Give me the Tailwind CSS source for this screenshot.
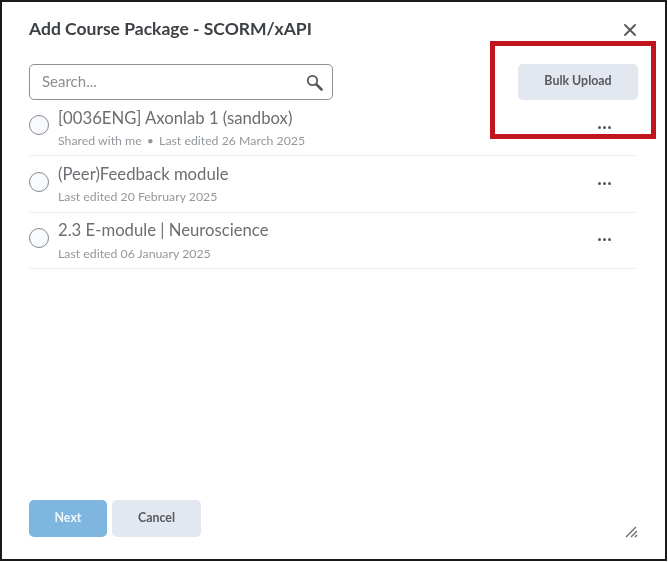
<!DOCTYPE html>
<html lang="en">
<head>
  <meta charset="UTF-8">
  <meta name="viewport" content="width=device-width, initial-scale=1.0">
  <title>Add Course Package</title>
  <script src="https://cdn.jsdelivr.net/npm/@tailwindcss/browser@4"></script>
</head>
<body class="bg-white font-['Lato',sans-serif]">
  <div class="relative w-[667px] h-[561px] overflow-hidden border-2 border-[#1a1a1a] bg-white flex flex-col pl-[27px] pr-[27px] blur-[0.4px]">
    <!-- Header -->
    <div class="flex items-center justify-between h-[52px] pt-[2px] shrink-0">
      <h1 class="text-[17.5px] font-bold text-[#3d4044]">Add Course Package - SCORM/xAPI</h1>
      <svg class="w-[12px] h-[12px] mr-[2px] mt-[2px]" viewBox="0 0 12 12" fill="none" stroke="#54585c" stroke-width="1.8" stroke-linecap="round"><path d="M1 1l10 10M11 1L1 11"/></svg>
    </div>

    <!-- Toolbar -->
    <div class="flex items-center justify-between mt-[10px] h-[36px] shrink-0">
      <div class="w-[304px] h-[36px] flex items-center justify-between border border-[#8b8f94] rounded-[5px] pl-[12px] pr-[9px]">
        <span class="text-[15px] leading-[20px] mb-[3px] text-[#8a8d91]">Search...</span>
        <svg class="w-[17px] h-[17px]" viewBox="0 0 17 17" fill="none" stroke="#54585c"><circle cx="6.5" cy="6.5" r="4.7" stroke-width="1.8"/><path d="M10.5 10.5l5 5" stroke-width="2.6" stroke-linecap="round"/></svg>
      </div>
      <button class="w-[120px] h-[36px] pb-[2px] bg-[#e3e7ef] rounded-[5px] text-[12.4px] font-bold text-[#56595e]">Bulk Upload</button>
    </div>

    <!-- Packages -->
    <ul class="w-[607px]">
      <li class="flex h-[56px] border-b border-[#e9edf3]">
        <div class="w-[20px] h-[20px] mt-[15px] rounded-full border-[1.5px] border-[#85898e] bg-[#f9fafe] shrink-0"></div>
        <div class="ml-[9px] flex-1">
          <p class="text-[16.7px] leading-[20px] mt-[8px] text-[#6b6e72]">[0036ENG] Axonlab 1 (sandbox)</p>
          <p class="text-[12.3px] leading-[16px] mt-[5px] text-[#94979b]">Shared with me <span class="mx-[2px]">•</span> Last edited 26 March 2025</p>
        </div>
        <div class="flex gap-[2px] mt-[26px] mr-[25px] h-[3px]">
          <span class="w-[3px] h-[3px] rounded-full bg-[#54585c]"></span><span class="w-[3px] h-[3px] rounded-full bg-[#54585c]"></span><span class="w-[3px] h-[3px] rounded-full bg-[#54585c]"></span>
        </div>
      </li>
      <li class="flex h-[57px] border-b border-[#e9edf3]">
        <div class="w-[20px] h-[20px] mt-[16px] rounded-full border-[1.5px] border-[#85898e] bg-[#f9fafe] shrink-0"></div>
        <div class="ml-[9px] flex-1">
          <p class="text-[16.7px] leading-[20px] mt-[8px] text-[#6b6e72]">(Peer)Feedback module</p>
          <p class="text-[12.3px] leading-[16px] mt-[5px] text-[#94979b]">Last edited 20 February 2025</p>
        </div>
        <div class="flex gap-[2px] mt-[26px] mr-[25px] h-[3px]">
          <span class="w-[3px] h-[3px] rounded-full bg-[#54585c]"></span><span class="w-[3px] h-[3px] rounded-full bg-[#54585c]"></span><span class="w-[3px] h-[3px] rounded-full bg-[#54585c]"></span>
        </div>
      </li>
      <li class="flex h-[56px] border-b border-[#e9edf3]">
        <div class="w-[20px] h-[20px] mt-[15px] rounded-full border-[1.5px] border-[#85898e] bg-[#f9fafe] shrink-0"></div>
        <div class="ml-[9px] flex-1">
          <p class="text-[16.7px] leading-[20px] mt-[7px] text-[#6b6e72]">2.3 E-module | Neuroscience</p>
          <p class="text-[12.3px] leading-[16px] mt-[6px] text-[#94979b]">Last edited 06 January 2025</p>
        </div>
        <div class="flex gap-[2px] mt-[25px] mr-[25px] h-[3px]">
          <span class="w-[3px] h-[3px] rounded-full bg-[#54585c]"></span><span class="w-[3px] h-[3px] rounded-full bg-[#54585c]"></span><span class="w-[3px] h-[3px] rounded-full bg-[#54585c]"></span>
        </div>
      </li>
    </ul>

    <!-- Footer -->
    <div class="mt-auto mb-[22px] flex gap-[5px]">
      <button class="w-[78px] h-[37px] bg-[#7fb6e0] rounded-[5px] text-[12.4px] font-bold text-[#eef5fb]">Next</button>
      <button class="w-[89px] h-[37px] bg-[#e3e7ef] rounded-[5px] text-[12.4px] font-bold text-[#56595e]">Cancel</button>
    </div>

    <!-- Resize handle -->
    <svg class="absolute right-[27px] bottom-[21px] w-[13px] h-[13px]" viewBox="0 0 13 13" fill="none" stroke="#6b6e72" stroke-width="1.4"><path d="M1 12L11 2M6 12l6-6M10 12l2-2"/></svg>

    <!-- Annotation box over the button -->
    <div class="absolute left-[488px] top-[39px] w-[166px] h-[98px] border-[5px] border-[#c0141f]"></div>
  </div>
</body>
</html>
